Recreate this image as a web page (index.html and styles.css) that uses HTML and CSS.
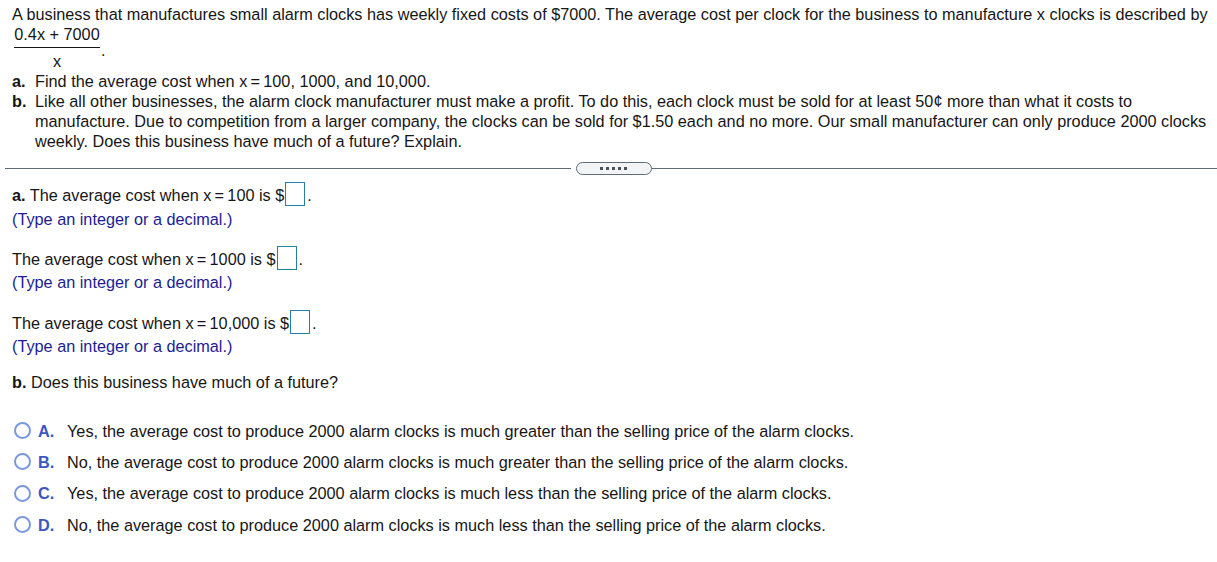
FILE: index.html
```html
<!DOCTYPE html>
<html lang="en">
<head>
<meta charset="utf-8">
<title>Average cost question</title>
<link rel="stylesheet" href="styles.css">
</head>
<body>
<div class="question">
  <p class="intro">A business that manufactures small alarm clocks has weekly fixed costs of $7000. The average cost per clock for the business to manufacture x clocks is described by</p>
  <div class="frac-row">
    <span class="frac"><span class="num">0.4x + 7000</span><span class="den">x</span></span><span class="frac-dot">.</span>
  </div>
  <ol class="parts">
    <li><span class="plabel">a.</span><span>Find the average cost when x&thinsp;=&thinsp;100, 1000, and 10,000.</span></li>
    <li><span class="plabel">b.</span><span>Like all other businesses, the alarm clock manufacturer must make a profit. To do this, each clock must be sold for at least 50¢ more than what it costs to manufacture. Due to competition from a larger company, the clocks can be sold for $1.50 each and no more. Our small manufacturer can only produce 2000 clocks weekly. Does this business have much of a future? Explain.</span></li>
  </ol>
</div>
<div class="divider">
  <span class="rule"></span>
  <button class="pill" type="button"><span class="d"></span><span class="d"></span><span class="d"></span><span class="d"></span><span class="d"></span></button>
  <span class="rule"></span>
</div>
<div class="answers">
  <div class="group">
    <div class="row"><b>a.</b> The average cost when x&thinsp;=&thinsp;100 is $<span class="box"></span>.</div>
    <div class="hint">(Type an integer or a decimal.)</div>
  </div>
  <div class="group">
    <div class="row">The average cost when x&thinsp;=&thinsp;1000 is $<span class="box"></span>.</div>
    <div class="hint">(Type an integer or a decimal.)</div>
  </div>
  <div class="group">
    <div class="row">The average cost when x&thinsp;=&thinsp;10,000 is $<span class="box"></span>.</div>
    <div class="hint">(Type an integer or a decimal.)</div>
  </div>
  <p class="bq"><b>b.</b> Does this business have much of a future?</p>
  <ul class="options">
    <li><span class="radio"></span><span class="olabel">A.</span><span>Yes, the average cost to produce 2000 alarm clocks is much greater than the selling price of the alarm clocks.</span></li>
    <li><span class="radio"></span><span class="olabel">B.</span><span>No, the average cost to produce 2000 alarm clocks is much greater than the selling price of the alarm clocks.</span></li>
    <li><span class="radio"></span><span class="olabel">C.</span><span>Yes, the average cost to produce 2000 alarm clocks is much less than the selling price of the alarm clocks.</span></li>
    <li><span class="radio"></span><span class="olabel">D.</span><span>No, the average cost to produce 2000 alarm clocks is much less than the selling price of the alarm clocks.</span></li>
  </ul>
</div>
</body>
</html>
```
FILE: styles.css
```css
html, body {
  margin: 0;
  padding: 0;
  background: #ffffff;
}
body {
  font-family: "Liberation Sans", Arial, sans-serif;
  font-size: 16.25px;
  line-height: 20px;
  color: #161616;
  padding-top: 4px;
}
.question {
  padding: 0 5px 0 12px;
}
.intro {
  margin: 0;
}
.frac-row {
  display: flex;
  align-items: center;
  padding-left: 2px;
}
.frac {
  display: inline-flex;
  flex-direction: column;
  align-items: center;
  width: 86px;
}
.num {
  padding-bottom: 3px;
  border-bottom: 1px solid #161616;
  width: 100%;
  text-align: center;
}
.den {
  padding-top: 3px;
}
.frac-dot {
  margin-left: 1px;
  margin-top: 4px;
}
.parts {
  list-style: none;
  margin: 0;
  padding: 0;
}
.parts li {
  display: grid;
  grid-template-columns: 23px 1fr;
}
.plabel {
  font-weight: bold;
}
.divider {
  display: flex;
  align-items: center;
  margin: 11px 0 0 5px;
  height: 13px;
}
.rule {
  flex: 1;
  height: 1px;
  background: #5d6b79;
}
.pill {
  width: 76px;
  height: 13px;
  margin-left: 5px;
  padding: 0;
  border: 1px solid #5d6b79;
  border-radius: 7px;
  background: #f3f4f6;
  display: flex;
  align-items: center;
  justify-content: center;
  gap: 3px;
}
.pill .d {
  width: 3px;
  height: 3px;
  background: #4a525c;
}
.answers {
  padding-left: 12px;
  margin-top: 7px;
}
.group + .group {
  margin-top: 17px;
}
.group + .group + .group {
  margin-top: 18px;
}
.box {
  display: inline-block;
  width: 18px;
  height: 22px;
  border: 1px solid #2680a4;
  vertical-align: -5px;
  margin-left: 1px;
  margin-right: 2px;
}
.hint {
  margin-top: 3px;
  color: #1c1c94;
}
.group + .group .hint {
  margin-top: 2px;
}
.bq {
  margin: 16px 0 0 0;
}
.options {
  list-style: none;
  margin: 23px 0 0 0;
  padding: 0;
}
.options li {
  display: flex;
  align-items: center;
  height: 31.33px;
}
.radio {
  width: 13px;
  height: 13px;
  border: 2px solid #7b98de;
  border-radius: 50%;
  margin-left: 2px;
  flex: none;
}
.olabel {
  font-weight: bold;
  color: #3a58be;
  margin-left: 7px;
  width: 29px;
  flex: none;
}
```
